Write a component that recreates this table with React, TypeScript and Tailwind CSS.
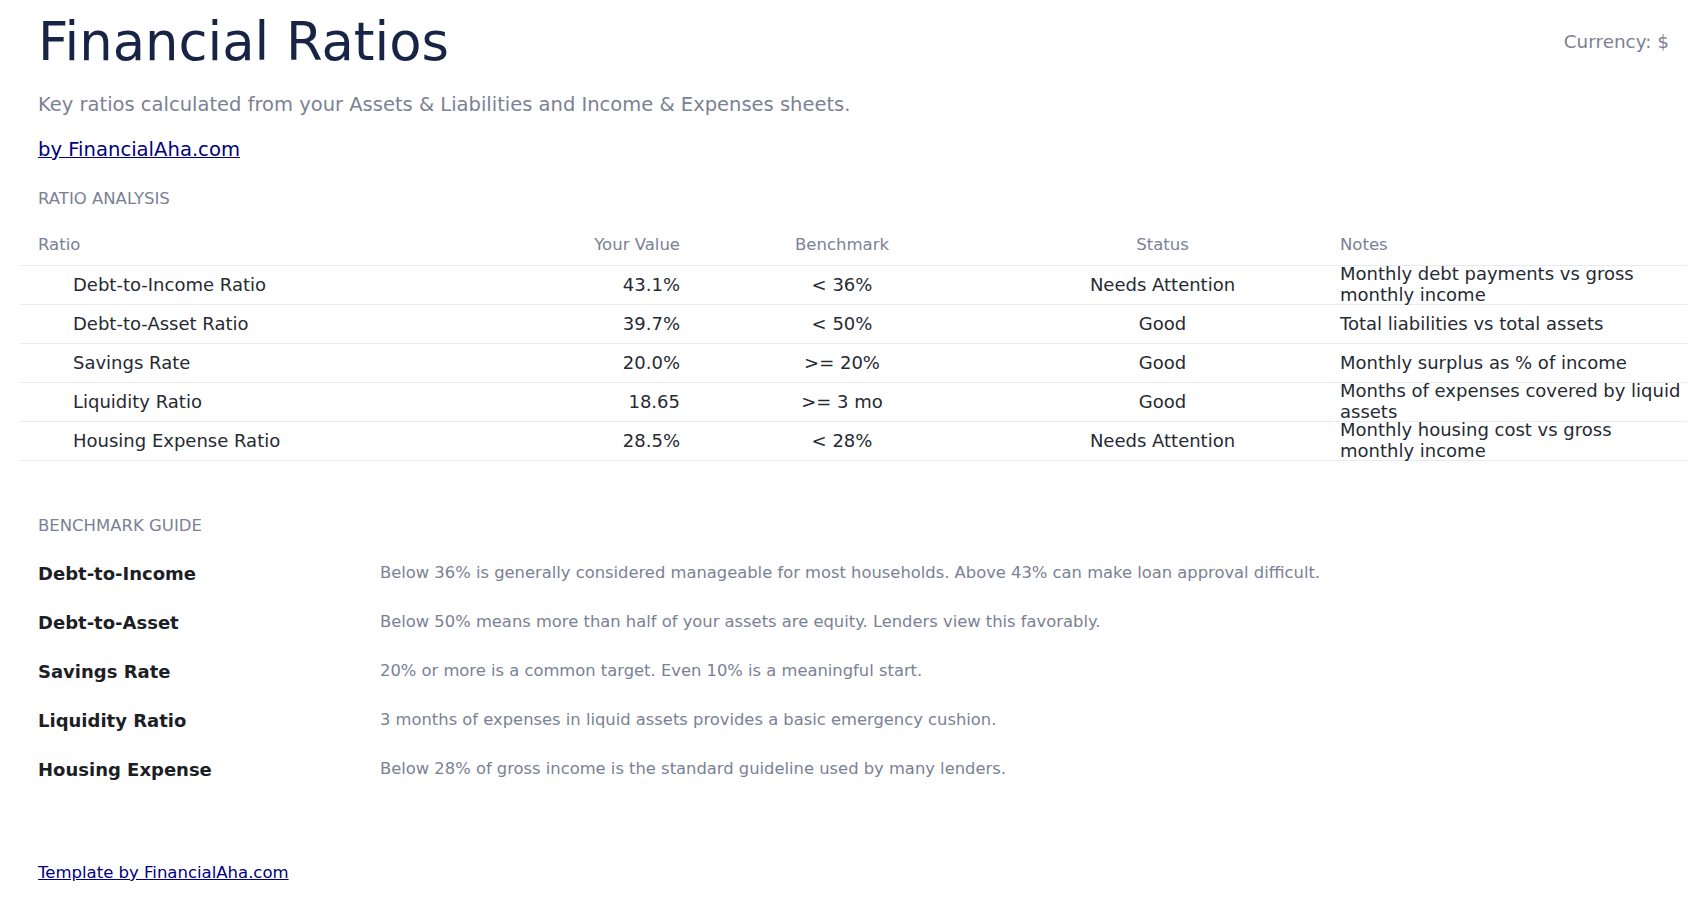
const RATIOS = [
  { name: "Debt-to-Income Ratio", value: "43.1%", bench: "< 36%", status: "Needs Attention", note: "Monthly debt payments vs gross monthly income" },
  { name: "Debt-to-Asset Ratio", value: "39.7%", bench: "< 50%", status: "Good", note: "Total liabilities vs total assets" },
  { name: "Savings Rate", value: "20.0%", bench: ">= 20%", status: "Good", note: "Monthly surplus as % of income" },
  { name: "Liquidity Ratio", value: "18.65", bench: ">= 3 mo", status: "Good", note: "Months of expenses covered by liquid assets" },
  { name: "Housing Expense Ratio", value: "28.5%", bench: "< 28%", status: "Needs Attention", note: "Monthly housing cost vs gross monthly income" },
];

const GUIDE = [
  { label: "Debt-to-Income", text: "Below 36% is generally considered manageable for most households. Above 43% can make loan approval difficult." },
  { label: "Debt-to-Asset", text: "Below 50% means more than half of your assets are equity. Lenders view this favorably." },
  { label: "Savings Rate", text: "20% or more is a common target. Even 10% is a meaningful start." },
  { label: "Liquidity Ratio", text: "3 months of expenses in liquid assets provides a basic emergency cushion." },
  { label: "Housing Expense", text: "Below 28% of gross income is the standard guideline used by many lenders." },
];

export default function App() {
  return (
    <div className="min-h-screen bg-white px-[38px] pt-[10px] font-['DejaVu_Sans',sans-serif]">
      {/* Header */}
      <div className="flex items-center justify-between">
        <h1 className="text-[52.8px] leading-[1.2] text-[#172445]">Financial Ratios</h1>
        <span className="text-[18.4px] text-[#7b8194]">Currency: $</span>
      </div>
      <p className="mt-[17px] text-[19.5px] leading-[1.5] text-[#7b8194]">
        Key ratios calculated from your Assets &amp; Liabilities and Income &amp; Expenses sheets.
      </p>
      <a href="#" className="mt-[15px] block w-fit text-[19.6px] leading-[1.5] text-[#000080] underline">
        by FinancialAha.com
      </a>

      {/* Ratio table */}
      <div className="mt-[23px] text-[16.5px] leading-[24px] uppercase text-[#7b8194]">Ratio Analysis</div>
      <div className="-mx-[18px] mt-[13px]">
        <div className="flex h-[42px] items-center border-b border-[#e9ebef] pt-[2px] text-[16.5px] text-[#7b8194]">
          <div className="w-[480px] shrink-0 pl-[18px]">Ratio</div>
          <div className="w-[198px] shrink-0 pr-[18px] text-right">Your Value</div>
          <div className="w-[288px] shrink-0 text-center">Benchmark</div>
          <div className="w-[353px] shrink-0 text-center">Status</div>
          <div className="flex-1 pl-[1px] pr-[4px]">Notes</div>
        </div>
        {RATIOS.map((r) => (
          <div key={r.name} className="flex h-[39px] items-center border-b border-[#e9ebef] pb-[1px] text-[18px] text-[#262a33]">
            <div className="w-[480px] shrink-0 pl-[53px]">{r.name}</div>
            <div className="w-[198px] shrink-0 pr-[18px] text-right">{r.value}</div>
            <div className="w-[288px] shrink-0 text-center">{r.bench}</div>
            <div className="w-[353px] shrink-0 text-center">{r.status}</div>
            <div className="flex-1 pl-[1px] pr-[4px] leading-[21.5px]">{r.note}</div>
          </div>
        ))}
      </div>

      {/* Benchmark guide */}
      <div className="mt-[53px] text-[16.5px] leading-[24px] uppercase text-[#7b8194]">Benchmark Guide</div>
      <div className="mt-[11px]">
        {GUIDE.map((g) => (
          <div key={g.label} className="flex h-[49px] items-center">
            <div className="w-[342px] shrink-0 text-[18px] font-bold text-[#1c1e26]">{g.label}</div>
            <div className="text-[16.35px] text-[#7b8194]">{g.text}</div>
          </div>
        ))}
      </div>

      <a href="#" className="mt-[67px] block w-fit text-[16.5px] leading-[24px] text-[#000080] underline">
        Template by FinancialAha.com
      </a>
    </div>
  );
}
